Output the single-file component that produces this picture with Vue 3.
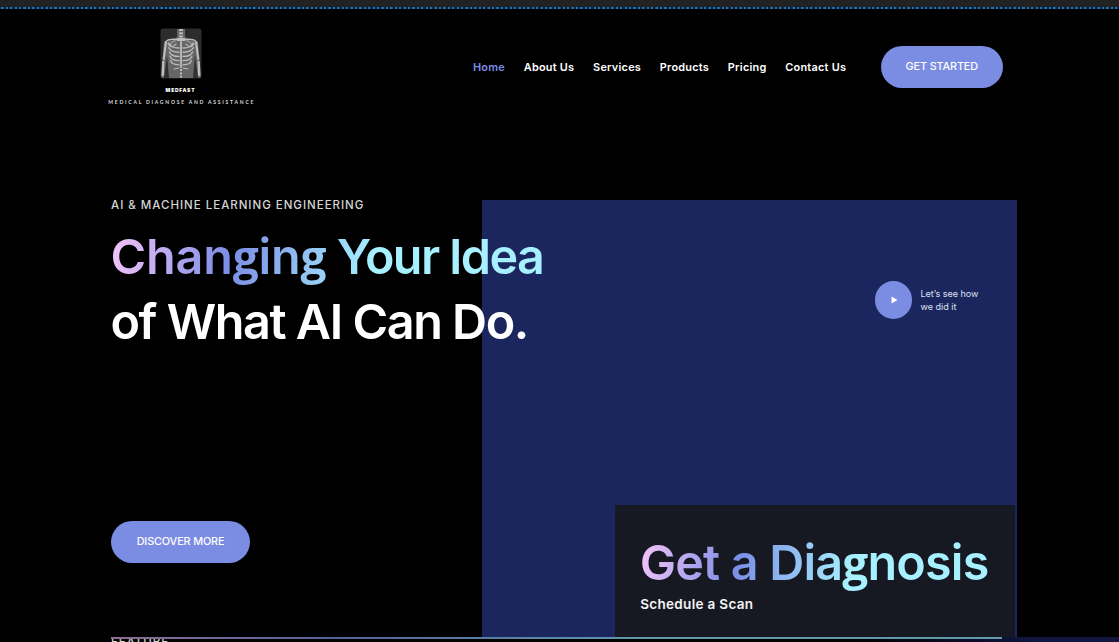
<script setup>
const links = ['Home', 'About Us', 'Services', 'Products', 'Pricing', 'Contact Us']
const ribs = [0, 1, 2, 3, 4]
</script>

<template>
  <div class="page">
    <div class="strip"></div>
    <header class="header">
      <div class="brand">
        <svg class="xray" width="42" height="51" viewBox="0 0 42 51">
          <rect width="41" height="50" x=".5" y=".5" rx="2.5" fill="#2c2c2c" />
          <path d="M17 1h8v8c2 2 10 1 13 5l3 34q0 2-2 2H3q-2 0-2-2L4 14c3-4 11-3 13-5z" fill="#666" />
          <path d="M7 27 9 50H4zM35 27l-2 23h5z" fill="#303030" />
          <g fill="none" stroke="#bdbdbd" stroke-linecap="round">
            <path d="M21 1v9" stroke-width="3.6" stroke-dasharray="2 1.2" stroke-linecap="butt" />
            <path d="M18 11.5h6" stroke-width="3" />
            <path d="M21 14v25" stroke-width="1.8" />
            <path d="M7 12.5c4-2.5 8 0 12-1.5M35 12.5c-4-2.5-8 0-12-1.5" stroke-width="1.4" />
            <path d="M9 15c0 5 5 4 7 1M33 15c0 5-5 4-7 1" stroke-width="1.3" />
            <path v-for="n in ribs" :key="n" :d="`M19 ${20 + n * 4.2}Q11 ${20 + n * 4.2} ${8 + n * .7} ${15.5 + n * 4.2}M23 ${20 + n * 4.2}Q31 ${20 + n * 4.2} ${34 - n * .7} ${15.5 + n * 4.2}`" stroke-width="1.35" />
            <path d="M15 13q-4 0-5 5M27 13q4 0 5 5M14 41l5-1M28 41l-5-1" stroke-width="1" />
            <path d="M6 14 3.7 31M36 14l2.3 17" stroke-width="2.1" />
            <path d="M3.3 34 2.8 47M38.7 34l.5 13" stroke-width="2.3" />
            <path d="M21 41v9" stroke-width="2" stroke-dasharray="2 1.4" stroke-linecap="butt" />
          </g>
        </svg>
        <div class="brand-name">MEDFAST</div>
        <div class="brand-tag">MEDICAL DIAGNOSE AND ASSISTANCE</div>
      </div>
      <nav class="nav">
        <a v-for="(link, i) in links" :key="link" :class="{ active: i === 0 }">{{ link }}</a>
      </nav>
      <a class="button start">GET STARTED</a>
    </header>

    <main class="hero">
      <section class="intro">
        <p class="eyebrow">AI &amp; MACHINE LEARNING ENGINEERING</p>
        <h1>
          <span class="gradient line-one"><b>Chan<i>g</i>in<i>g</i></b> Your Idea</span>
          <span class="line-two">of What AI Can Do.</span>
        </h1>
        <a class="button discover">DISCOVER MORE</a>
      </section>
      <section class="panel">
        <div class="video">
          <span class="play"><svg width="7" height="8" viewBox="0 0 7 8"><path d="M.5.5 6.5 4l-6 3.5z" fill="#fff" /></svg></span>
          <p>Let’s see how<br>we did it</p>
        </div>
        <div class="card">
          <h2 class="gradient">Get a Dia<i>g</i>nosis</h2>
          <p>Schedule a Scan</p>
        </div>
      </section>
    </main>
    <footer class="feature"><span>FEATURE</span></footer>
  </div>
</template>

<style>
body { margin: 0; background: #000; }
</style>

<style scoped>
.page {
  position: relative;
  width: 1119px;
  height: 642px;
  overflow: hidden;
  background: #000;
  color: #fff;
  font-family: Inter, "Open Sans", sans-serif;
}
p, h1, h2 { margin: 0; }
b { font-weight: inherit; letter-spacing: -.2px; }
i { font-family: "Open Sans", sans-serif; font-style: normal; font-weight: 700; font-size: 46px; line-height: 1; }
.strip {
  height: 9px;
  background:
    repeating-linear-gradient(90deg, #0b2439 0 1.2px, #1878c4 1.5px 3.4px, #0b2439 3.7px 4.42px) 0 7px / 100% 2px no-repeat,
    #222;
}
.header { display: flex; height: 191px; align-items: flex-start; }
.brand { width: 148px; margin: 19px 0 0 107px; display: flex; flex-direction: column; align-items: center; }
.xray { display: block; }
.brand-name { margin-top: 8px; font-size: 5px; line-height: 7px; font-weight: 900; letter-spacing: .75px; margin-left: -1px; }
.brand-tag { margin-top: 4px; font: 700 5px/8px Lato, sans-serif; letter-spacing: 1.78px; margin-right: -1.5px; white-space: nowrap; color: #ddd; }
.nav { display: flex; gap: 18.8px; margin: 51px 0 0 218px; width: 408px; font-size: 10.9px; line-height: 14px; font-weight: 600; letter-spacing: .24px; white-space: nowrap; }
.nav .active { color: #7b8ce3; }
.button {
  display: flex;
  align-items: center;
  justify-content: center;
  height: 42px;
  border-radius: 21px;
  background: #7b8ce3;
  font-size: 10.8px;
  font-weight: 550;
  letter-spacing: -.12px;
}
.start { width: 121.5px; margin-top: 36.7px; }
.hero { display: flex; height: 437px; }
.intro { position: relative; z-index: 1; width: 370.7px; margin-left: 111px; white-space: nowrap; }
.eyebrow { font-size: 11.5px; line-height: 14px; font-weight: 550; letter-spacing: .98px; color: #d4d4d4; margin-top: -2px; }
h1 { margin-top: 12px; font-size: 48.5px; line-height: 65px; font-weight: 630; letter-spacing: -1.45px; }
h1 span { display: block; width: 435px; margin-left: -.5px; }
.line-one { letter-spacing: -1.65px; }
.gradient {
  color: transparent;
  background: linear-gradient(100deg, #f8c5fb 0%, #7b8de5 28%, #a6f0ff 60%);
  background-clip: text;
  -webkit-background-clip: text;
}
.discover { width: 139px; margin-top: 166.5px; }
.panel { width: 535.5px; height: 436.6px; margin-top: .4px; background: #1b265e; display: flex; flex-direction: column; }
.video { display: flex; align-items: center; gap: 8px; margin: 81px 0 0 393.3px; }
.play { display: flex; width: 37.5px; height: 37.5px; border-radius: 50%; background: #7b8ce3; align-items: center; justify-content: center; }
.play svg { margin-left: 1px; }
.video p { font-size: 9px; line-height: 13px; color: #dfe2f2; }
.card { box-sizing: border-box; width: 399.5px; height: 132px; margin: 186px 0 0 133.5px; padding: 25px 0 0 25px; background: #161922; }
h2 { width: 351px; margin-left: -.5px; font-size: 48.5px; line-height: 65px; font-weight: 630; letter-spacing: -.82px; white-space: nowrap; }
.card p { font-size: 13.5px; line-height: 18px; font-weight: 600; letter-spacing: .32px; color: #f4f4f4; }
.feature {
  position: relative;
  height: 5px;
  overflow: hidden;
  background: linear-gradient(90deg, #000 850px, #11163f 1040px);
}
.feature::before {
  content: "";
  position: absolute;
  left: 111px;
  top: 0;
  width: 891px;
  height: 1.5px;
  background: linear-gradient(90deg, #8d6c92, #53629d 25%, #6099aa 60%);
}
.feature span { display: block; margin: -2px 0 0 111px; font-size: 11.5px; line-height: 14px; font-weight: 550; letter-spacing: .98px; color: #d4d4d4; }
</style>
